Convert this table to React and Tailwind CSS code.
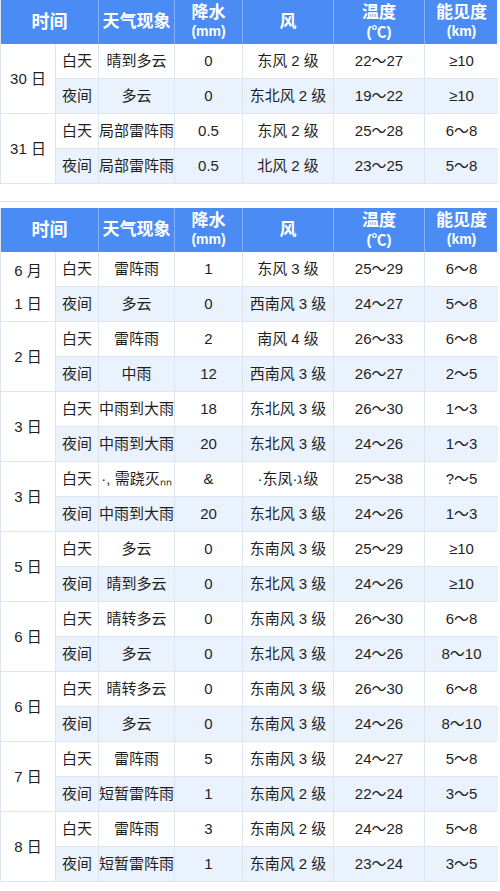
const cols = "grid grid-cols-[55px_43px_76px_68px_91px_91px_73px]";

const first = [
  {
    date: ["30 日"],
    rows: [
      ["白天", "晴到多云", "0", "东风 2 级", "22～27", "≥10"],
      ["夜间", "多云", "0", "东北风 2 级", "19～22", "≥10"],
    ],
  },
  {
    date: ["31 日"],
    rows: [
      ["白天", "局部雷阵雨", "0.5", "东风 2 级", "25～28", "6～8"],
      ["夜间", "局部雷阵雨", "0.5", "北风 2 级", "23～25", "5～8"],
    ],
  },
];

const second = [
  {
    date: ["6 月", "1 日"],
    rows: [
      ["白天", "雷阵雨", "1", "东风 3 级", "25～29", "6～8"],
      ["夜间", "多云", "0", "西南风 3 级", "24～27", "5～8"],
    ],
  },
  {
    date: ["2 日"],
    rows: [
      ["白天", "雷阵雨", "2", "南风 4 级", "26～33", "6～8"],
      ["夜间", "中雨", "12", "西南风 3 级", "26～27", "2～5"],
    ],
  },
  {
    date: ["3 日"],
    rows: [
      ["白天", "中雨到大雨", "18", "东北风 3 级", "26～30", "1～3"],
      ["夜间", "中雨到大雨", "20", "东北风 3 级", "24～26", "1～3"],
    ],
  },
  {
    date: ["3 日"],
    rows: [
      ["白天", "·, 需跷灭ₙₙ", "&", "·东凤·ℷ级", "25～38", "?～5"],
      ["夜间", "中雨到大雨", "20", "东北风 3 级", "24～26", "1～3"],
    ],
  },
  {
    date: ["5 日"],
    rows: [
      ["白天", "多云", "0", "东南风 3 级", "25～29", "≥10"],
      ["夜间", "晴到多云", "0", "东北风 3 级", "24～26", "≥10"],
    ],
  },
  {
    date: ["6 日"],
    rows: [
      ["白天", "晴转多云", "0", "东南风 3 级", "26～30", "6～8"],
      ["夜间", "多云", "0", "东北风 3 级", "24～26", "8～10"],
    ],
  },
  {
    date: ["6 日"],
    rows: [
      ["白天", "晴转多云", "0", "东南风 3 级", "26～30", "6～8"],
      ["夜间", "多云", "0", "东南风 3 级", "24～26", "8～10"],
    ],
  },
  {
    date: ["7 日"],
    rows: [
      ["白天", "雷阵雨", "5", "东南风 3 级", "24～27", "5～8"],
      ["夜间", "短暂雷阵雨", "1", "东南风 2 级", "22～24", "3～5"],
    ],
  },
  {
    date: ["8 日"],
    rows: [
      ["白天", "雷阵雨", "3", "东南风 2 级", "24～28", "5～8"],
      ["夜间", "短暂雷阵雨", "1", "东南风 2 级", "23～24", "3～5"],
    ],
  },
];

const Header = () => (
  <div className={`${cols} h-[44px] bg-[#4b8cf4] text-white font-bold`}>
    <div className="col-span-2 flex items-center justify-center border-r border-[#86b0f6] text-[18px]">
      时间
    </div>
    <div className="flex items-center justify-center border-r border-[#86b0f6] text-[17px]">
      天气现象
    </div>
    <div className="flex flex-col items-center justify-center border-r border-[#86b0f6] leading-[19px]">
      <span className="text-[17px]">降水</span>
      <span className="text-[14px]">(mm)</span>
    </div>
    <div className="flex items-center justify-center border-r border-[#86b0f6] text-[17px]">
      风
    </div>
    <div className="flex flex-col items-center justify-center border-r border-[#86b0f6] leading-[19px]">
      <span className="text-[17px]">温度</span>
      <span className="text-[15px]">(℃)</span>
    </div>
    <div className="flex flex-col items-center justify-center leading-[19px]">
      <span className="text-[17px]">能见度</span>
      <span className="text-[14px]">(km)</span>
    </div>
  </div>
);

const Group = ({ g }) => (
  <div className={`${cols} border-b border-[#dfe5ec]`}>
    <div className="row-span-2 flex flex-col items-center justify-center border-r border-[#dfe5ec] text-[15px] leading-[33px] bg-white">
      {g.date.map((d, i) => (
        <span key={i}>{d}</span>
      ))}
    </div>
    {g.rows.map((r, ri) =>
      r.map((c, ci) => (
        <div
          key={`${ri}-${ci}`}
          className={`flex items-center justify-center whitespace-nowrap text-[15px] border-[#dfe5ec] ${
            ci < 5 ? "border-r" : ""
          } ${ri === 0 ? "h-[35px] border-b bg-white" : "h-[34px] bg-[#eaf2fd]"}`}
        >
          {c}
        </div>
      ))
    )}
  </div>
);

export default function App() {
  return (
    <div
      className="w-[500px] min-h-[891px] bg-white text-[#1f1f1f] overflow-hidden"
      style={{ fontFamily: '"Liberation Sans", "Noto Sans CJK SC", sans-serif' }}
    >
      <div className="w-[497px] border-l border-[#dfe5ec]">
        <Header />
        {first.map((g, i) => (
          <Group key={i} g={g} />
        ))}
      </div>
      <div className="h-[17px]" />
      <div className="h-px bg-[#e2e2e2]" />
      <div className="h-[6px]" />
      <div className="w-[497px] border-l border-[#dfe5ec]">
        <Header />
        {second.map((g, i) => (
          <Group key={i} g={g} />
        ))}
      </div>
    </div>
  );
}
